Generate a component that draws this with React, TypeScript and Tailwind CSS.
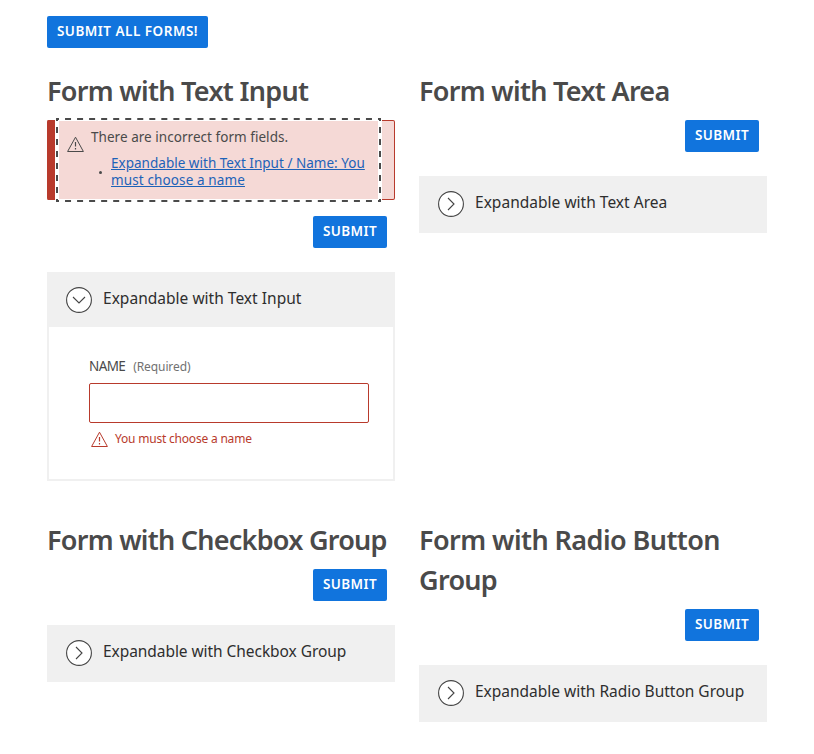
import React from "react";

function Title({ children }: { children: React.ReactNode }) {
  return (
    <h2 className="relative -top-px text-[27px] leading-10 font-semibold tracking-[-0.7px] whitespace-nowrap text-[#4a4a4a]">
      {children}
    </h2>
  );
}

function Submit() {
  return (
    <div className="flex justify-end pr-2">
      <button className="h-8 w-[74px] rounded-[2px] bg-[#1174dd] text-[13.5px] leading-none font-semibold text-white">
        <span className="tracking-[0.4px]">SUBMIT</span>
      </button>
    </div>
  );
}

function Warning() {
  return (
    <svg width="18" height="18" viewBox="0 0 18 18" fill="none" stroke="currentColor" strokeWidth="1" strokeLinejoin="round" className="shrink-0">
      <path d="M8.5 2.2 L16.4 16.5 H0.6 Z" />
      <path d="M8.5 7v4.5M8.5 13v1.5" strokeWidth="1.2" />
    </svg>
  );
}

function FocusRing() {
  return (
    <svg width="325" height="84" viewBox="0 0 325 84" fill="none" stroke="#4a4a4a" strokeWidth="2" className="pointer-events-none absolute -top-[3px] -left-[3px] max-w-none">
      <path d="M0 1H325M0 83H325" strokeDasharray="6 6.037" strokeDashoffset="3" />
      <path d="M1 0V84M324 0V84" strokeDasharray="6 6" strokeDashoffset="3" />
    </svg>
  );
}

function Expandable({ label, open = false, children }: { label: React.ReactNode; open?: boolean; children?: React.ReactNode }) {
  return (
    <section className="mt-6 border-2 border-[#f0f0f0]">
      <div className="flex h-[53px] items-center bg-[#f0f0f0] pl-[17px]">
        <svg width="26" height="26" viewBox="0 0 26 26" fill="none" stroke="#444" strokeWidth="1.1" className="-mt-px shrink-0">
          <circle cx="13" cy="13" r="12.4" fill="white" />
          <path d={open ? "M7 10l6 6 6-6" : "M10 7l6 6-6 6"} />
        </svg>
        <span className="ml-[11px] pb-[5px] text-[15.5px] leading-6 tracking-[0.02px] whitespace-nowrap text-[#2e2e2e]">{label}</span>
      </div>
      {children}
    </section>
  );
}

export default function App() {
  return (
    <main className="h-[754px] w-[814px] bg-white pt-4 pl-[47px] font-['Noto_Sans',sans-serif]">
      <button className="block h-8 w-[161px] rounded-[2px] bg-[#1174dd] text-[13.5px] leading-none font-semibold whitespace-nowrap text-white">
        <span className="tracking-[0.5px]">SUBMIT ALL FORMS!</span>
      </button>
      <div className="mt-6 grid w-[720px] grid-cols-2 gap-x-6 gap-y-10">
        <div>
          <Title>Form with Text Input</Title>
          <div className="mt-2 mb-4 flex h-20 rounded-[2px] border-y border-r border-[#b83a2c] bg-[#f5d9d6]">
            <div className="-my-px w-2 rounded-l-[2px] bg-[#b83a2c]" />
            <div className="relative ml-1 flex w-[319px] pl-2 text-[13.5px] text-[#4a4a4a] shadow-[0_0_0_4px_white]">
              <FocusRing />
              <div className="pt-[14px]"><Warning /></div>
              <div className="ml-[6px] pt-[6px]">
                <p className="leading-5 tracking-[0.04px] whitespace-nowrap">There are incorrect form fields.</p>
                <div className="mt-[8px] flex items-center">
                  <span className="mt-px ml-2 size-[3px] rounded-full bg-[#4a4a4a]" />
                  <a className="ml-[9px] leading-[17px] tracking-[0.02px] whitespace-nowrap text-[#1d62b8] underline">
                    Expandable with Text Input / Name: You<br /><span className="tracking-[0.12px]">must choose a name</span>
                  </a>
                </div>
              </div>
            </div>
          </div>
          <Submit />
          <Expandable label="Expandable with Text Input" open>
            <div className="h-[152px] pt-[30px] pr-6 pl-10">
              <label className="flex h-5 items-center text-[13.5px] text-[#4a4a4a]">
                <span className="pb-[2px] tracking-[-0.6px]">NAME</span>
                <span className="ml-2 text-[12px] tracking-[-0.1px] text-[#717171]">(Required)</span>
              </label>
              <input className="mt-[6px] block h-10 w-[280px] rounded-[2px] border border-[#b83a2c] bg-white" />
              <div className="mt-[7px] flex items-center pl-[1.5px] text-[12px] leading-4 text-[#b83a2c]">
                <Warning />
                <span className="ml-[6.5px] tracking-[-0.2px]">You must choose a name</span>
              </div>
            </div>
          </Expandable>
        </div>
        <div>
          <Title>Form with Text Area</Title>
          <div className="h-2" />
          <Submit />
          <Expandable label="Expandable with Text Area" />
        </div>
        <div>
          <Title><span className="tracking-[-0.74px]">Form with Checkbox Group</span></Title>
          <div className="h-2" />
          <Submit />
          <Expandable label={<span className="tracking-[-0.06px]">Expandable with Checkbox Group</span>} />
        </div>
        <div>
          <Title><span className="tracking-[-0.56px]">Form with Radio Button</span><br />Group</Title>
          <div className="h-2" />
          <Submit />
          <Expandable label={<span className="tracking-[-0.01px]">Expandable with Radio Button Group</span>} />
        </div>
      </div>
    </main>
  );
}
